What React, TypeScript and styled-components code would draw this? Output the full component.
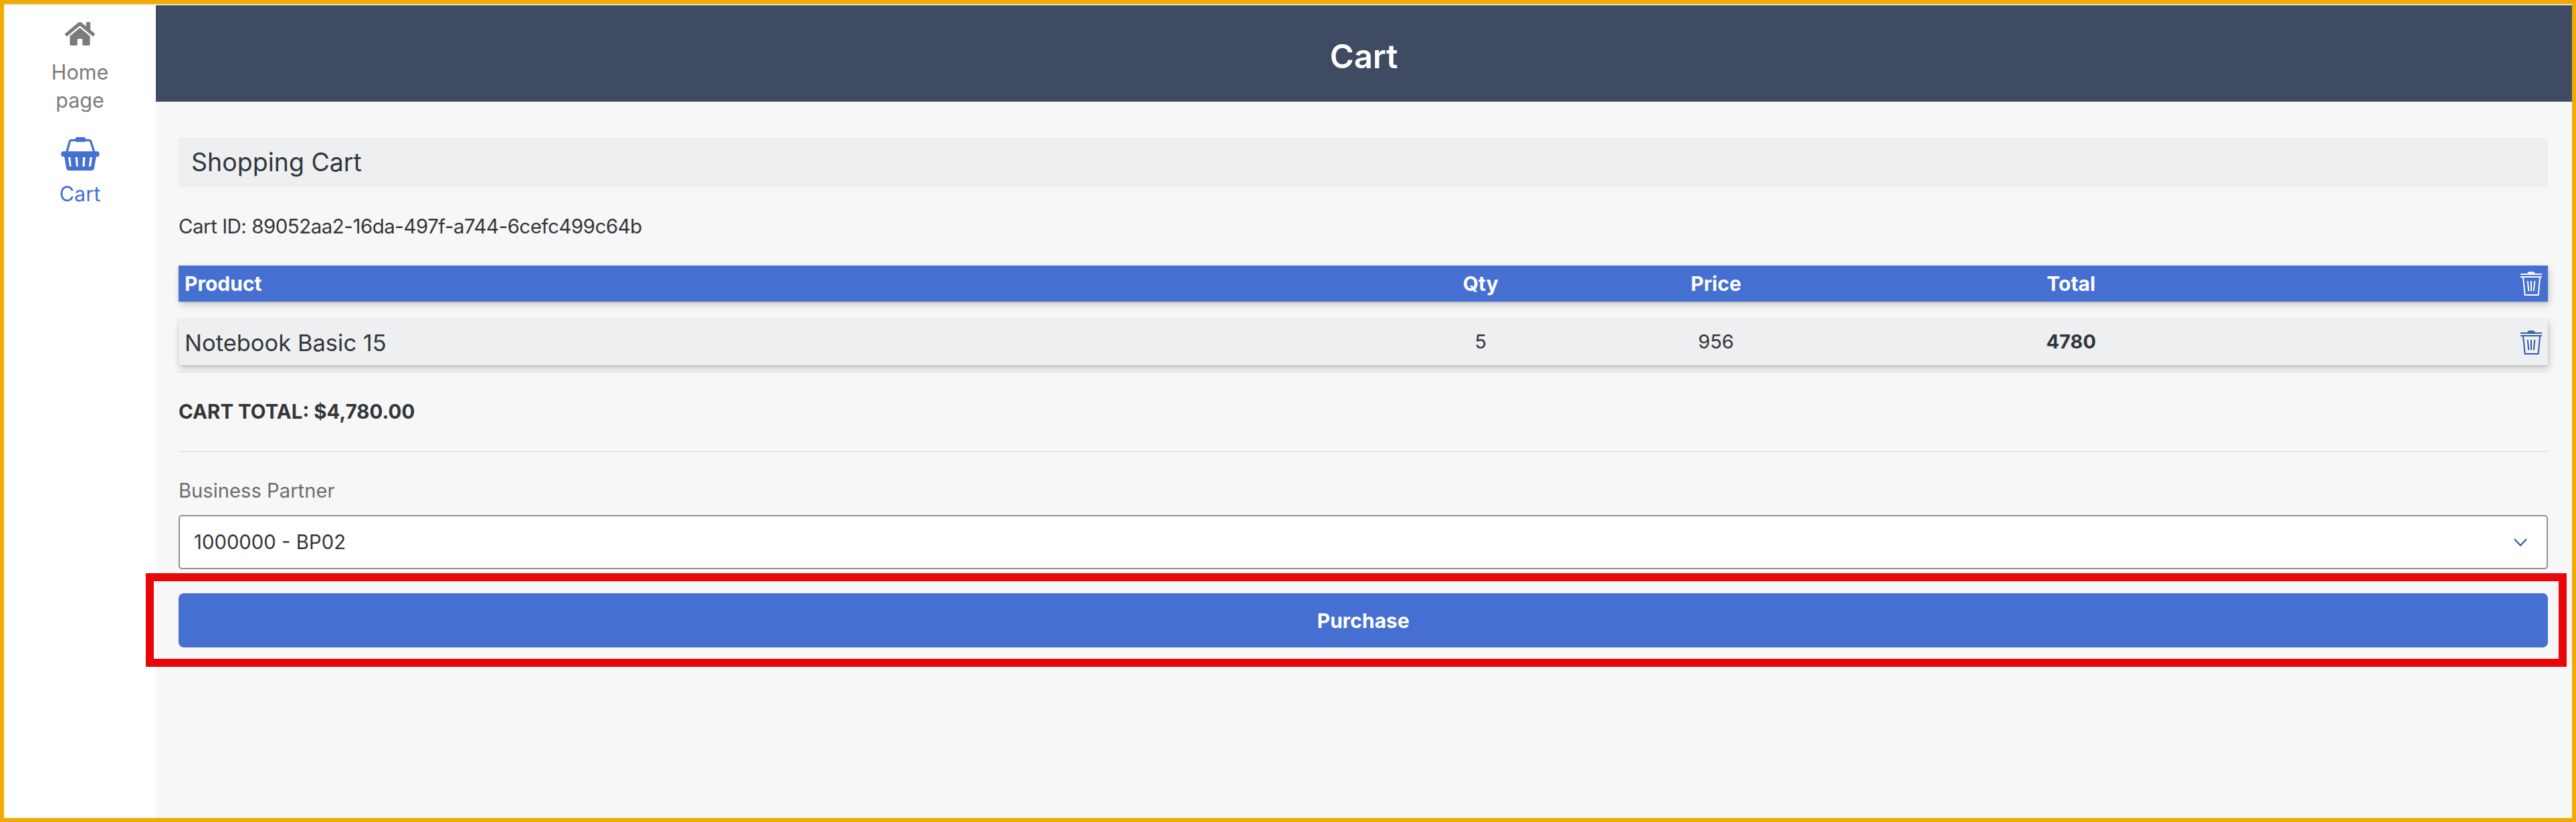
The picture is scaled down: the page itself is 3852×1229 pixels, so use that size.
import React from "react";
import styled, { createGlobalStyle } from "styled-components";
import { FaHome } from "react-icons/fa";

const Global = createGlobalStyle`
  html, body { margin: 0; padding: 0; background: #fff; }
  * { box-sizing: border-box; }
`;

const Frame = styled.div`
  width: 3852px;
  height: 1229px;
  border: 6px solid #f0ab00;
  display: flex;
  flex-direction: column;
  background: #fff;
  overflow: hidden;
  font-family: Inter, "Noto Sans", "Liberation Sans", sans-serif;
  color: #32363a;
`;

const TopStrip = styled.div`
  height: 2px;
  background: #e4e4e4;
  flex: none;
`;

const Shell = styled.div`
  flex: 1;
  display: flex;
  min-height: 0;
`;

const Sidebar = styled.nav`
  width: 227px;
  flex: none;
  background: #fff;
  display: flex;
  flex-direction: column;
  align-items: center;
  padding-top: 20px;
`;

const NavItem = styled.div<{ $active?: boolean; $gap: number; $bottom: number }>`
  display: flex;
  flex-direction: column;
  align-items: center;
  text-align: center;
  width: 150px;
  margin-bottom: ${(p) => p.$bottom}px;
  gap: ${(p) => p.$gap}px;
  color: ${(p) => (p.$active ? "#456fd1" : "#7d7b78")};
  font-size: 30.5px;
  line-height: 42px;
`;

const Main = styled.main`
  flex: 1;
  min-width: 0;
  background: #f7f7f7;
  display: flex;
  flex-direction: column;
`;

const Header = styled.header`
  height: 144px;
  flex: none;
  padding-top: 8px;
  background: #3f4b63;
  color: #fff;
  font-size: 49px;
  font-weight: 600;
  display: flex;
  align-items: center;
  justify-content: center;
`;

const Content = styled.div`
  padding: 54px 36px 0 34px;
  display: flex;
  flex-direction: column;
`;

const SectionTitle = styled.h2`
  margin: 0;
  height: 74px;
  background: #eeeff1;
  padding-left: 19px;
  font-size: 37.5px;
  font-weight: 400;
  line-height: 74px;
`;

const CartId = styled.div`
  margin-top: 38px;
  font-size: 29.5px;
  letter-spacing: -0.5px;
  line-height: 40px;
`;

const TableRow = styled.div<{ $head?: boolean }>`
  display: grid;
  grid-template-columns: 1772px 352px 352px 710px 1fr;
  align-items: center;
  margin-top: ${(p) => (p.$head ? 39 : 27)}px;
  height: ${(p) => (p.$head ? 54 : 68)}px;
  background: ${(p) => (p.$head ? "#456fd1" : "#eeeff1")};
  color: ${(p) => (p.$head ? "#fff" : "#32363a")};
  font-weight: ${(p) => (p.$head ? 700 : 400)};
  font-size: ${(p) => (p.$head ? 30 : 29)}px;
  box-shadow: 2px 5px 10px rgba(0, 0, 0, 0.18), 0 1px 3px rgba(0, 0, 0, 0.12);
`;

const ProductCell = styled.div<{ $large?: boolean }>`
  padding-left: 9px;
  font-size: ${(p) => (p.$large ? 34.5 : 30)}px;
`;

const NumCell = styled.div<{ $bold?: boolean; $raised?: boolean }>`
  text-align: center;
  padding-right: 2px;
  padding-bottom: ${(p) => (p.$raised ? 4 : 0)}px;
  font-weight: ${(p) => (p.$bold ? 700 : "inherit")};
`;

const IconCell = styled.div`
  display: flex;
  justify-content: flex-end;
  padding-right: 9px;
`;

const Divider = styled.hr<{ $top: number }>`
  margin: ${(p) => p.$top}px 0 0;
  border: 0;
  height: 2px;
  background: #e5e5e5;
`;

const CartTotal = styled.div`
  margin-top: 38px;
  font-size: 29.5px;
  font-weight: 700;
  line-height: 40px;
`;

const FieldLabel = styled.label`
  margin-top: 38px;
  font-size: 29.2px;
  line-height: 40px;
  color: #6a6d70;
`;

const SelectBox = styled.div`
  margin-top: 16px;
  height: 81px;
  background: #fff;
  border: 2px solid #89919a;
  border-radius: 5px;
  padding: 0 29px 0 21px;
  display: flex;
  align-items: center;
  justify-content: space-between;
  font-size: 29.3px;
`;

const ButtonArea = styled.div`
  position: relative;
  margin-top: 36px;
  &::after {
    content: "";
    position: absolute;
    top: -30px;
    bottom: -29px;
    left: -49px;
    right: -28px;
    border: 12px solid #e90606;
    pointer-events: none;
  }
`;

const PurchaseButton = styled.button`
  display: block;
  width: 100%;
  height: 81px;
  border: 0;
  border-radius: 8px;
  background: #456fd1;
  color: #fff;
  font-family: inherit;
  font-size: 30px;
  font-weight: 700;
`;

const Basket = () => (
  <svg width="58" height="50" viewBox="0 0 172 150" fill="#456fd1">
    <path d="M26 66 L38 22 Q40 14 50 14 H122 Q132 14 134 22 L148 66" fill="none" stroke="#456fd1" strokeWidth="10" />
    <rect x="64" y="0" width="46" height="22" rx="8" />
    <rect x="0" y="64" width="172" height="24" rx="11" />
    <path fillRule="evenodd" d="M14 84 H158 L148 142 Q146 150 138 150 H34 Q26 150 24 142 Z M32 90 L38 132 H46 L42 90 Z M64 90 L68 132 H76 L74 90 Z M98 90 L96 132 H106 L108 90 Z M130 90 L124 132 H134 L140 90 Z" />
  </svg>
);

const Trash = ({ color }: { color: string }) => (
  <svg width="32" height="36" viewBox="0 0 96 108" fill="none" stroke={color} strokeWidth="6">
    <path d="M31 8 Q33 1 48 1 Q63 1 65 8 Z" fill={color} strokeWidth="1" />
    <path d="M0 12 H96 M0 24 H96" />
    <path d="M12 26 L20 105 H80 L87 26" />
    <path d="M32 42 L37 88 M48 42 V88 M64 42 L59 88" />
  </svg>
);

const Chevron = () => (
  <svg width="20" height="12" viewBox="0 0 20 12" fill="none" stroke="#2f5ba8" strokeWidth="2.2">
    <path d="M1 1 L10 10.5 L19 1" />
  </svg>
);

export default function App() {
  return (
    <>
      <Global />
      <Frame>
        <TopStrip />
        <Shell>
          <Sidebar>
            <NavItem $gap={14} $bottom={34}>
              <FaHome size={45} />
              <span>Home page</span>
            </NavItem>
            <NavItem $active $gap={14} $bottom={0}>
              <Basket />
              <span>Cart</span>
            </NavItem>
          </Sidebar>
          <Main>
            <Header>Cart</Header>
            <Content>
              <SectionTitle>Shopping Cart</SectionTitle>
              <CartId>Cart ID: 89052aa2-16da-497f-a744-6cefc499c64b</CartId>
              <TableRow $head>
                <ProductCell>Product</ProductCell>
                <NumCell>Qty</NumCell>
                <NumCell>Price</NumCell>
                <NumCell>Total</NumCell>
                <IconCell>
                  <Trash color="#ffffff" />
                </IconCell>
              </TableRow>
              <TableRow>
                <ProductCell $large>Notebook Basic 15</ProductCell>
                <NumCell $raised>5</NumCell>
                <NumCell $raised>956</NumCell>
                <NumCell $raised $bold>4780</NumCell>
                <IconCell>
                  <Trash color="#2f5ba8" />
                </IconCell>
              </TableRow>
              <Divider $top={9} />
              <CartTotal>CART TOTAL: $4,780.00</CartTotal>
              <Divider $top={39} />
              <FieldLabel>Business Partner</FieldLabel>
              <SelectBox>
                <span>1000000 - BP02</span>
                <Chevron />
              </SelectBox>
              <ButtonArea>
                <PurchaseButton>Purchase</PurchaseButton>
              </ButtonArea>
            </Content>
          </Main>
        </Shell>
      </Frame>
    </>
  );
}
